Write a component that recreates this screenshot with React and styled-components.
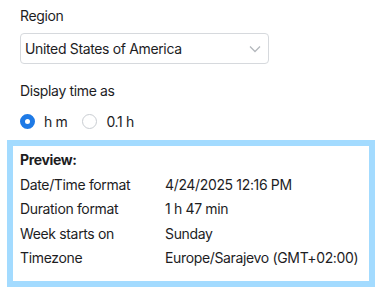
import styled, { createGlobalStyle } from 'styled-components';
import { Fragment } from 'react';

const GlobalStyle = createGlobalStyle`
  body {
    margin: 0;
    background: #fff;
    font-family: Inter, "Noto Sans", sans-serif;
    color: #1d1d1f;
    letter-spacing: -0.35px;
  }
`;

const Page = styled.div`
  width: 388px;
  height: 292px;
  padding-top: 6px;
  box-sizing: border-box;
  white-space: nowrap;
`;

const Section = styled.div`
  padding: 0 20px;
`;

const Label = styled.div`
  font-size: 14px;
  line-height: 20px;
  margin-bottom: ${(props) => props.gap || 7}px;
`;

const Select = styled.div`
  width: 249px;
  height: 31px;
  box-sizing: border-box;
  border: 1px solid #d6d9dd;
  border-radius: 4px;
  display: flex;
  align-items: center;
  justify-content: space-between;
  padding: 0 7px 0 4px;
  font-size: 14px;
  margin-bottom: 17px;
`;

const RadioRow = styled.div`
  display: flex;
  align-items: center;
  gap: 15px;
  height: 24px;
  margin-bottom: 7px;
`;

const RadioOption = styled.label`
  display: flex;
  align-items: center;
  gap: 9px;
  font-size: 14px;
`;

const RadioDot = styled.span`
  width: 15px;
  height: 15px;
  box-sizing: border-box;
  border-radius: 50%;
  border: ${(props) => (props.checked ? '5px solid #1e7ae6' : '1px solid #c9cdd2')};
  background: #fff;
`;

const Preview = styled.div`
  margin: 0 13px 0 7px;
  border: 6px solid #a3dbff;
  padding: 2px 7px 10px;
`;

const PreviewTitle = styled.div`
  font-size: 14px;
  font-weight: 700;
  line-height: 24.5px;
`;

const Grid = styled.div`
  display: grid;
  grid-template-columns: 145px 1fr;
  font-size: 14px;
  line-height: 24.5px;
`;

function Chevron() {
  return (
    <svg width="12" height="8" viewBox="0 0 12 8" fill="none">
      <path d="M1 1.5l5 5 5-5" stroke="#b4b8bd" strokeWidth="1.3" />
    </svg>
  );
}

const rows = [
  ['Date/Time format', '4/24/2025 12:16 PM'],
  ['Duration format', '1 h 47 min'],
  ['Week starts on', 'Sunday'],
  ['Timezone', 'Europe/Sarajevo (GMT+02:00)'],
];

export default function App() {
  return (
    <Page>
      <GlobalStyle />
      <Section>
        <Label>Region</Label>
        <Select>
          <span>United States of America</span>
          <Chevron />
        </Select>
        <Label gap={8}>Display time as</Label>
        <RadioRow>
          <RadioOption>
            <RadioDot checked />
            h m
          </RadioOption>
          <RadioOption>
            <RadioDot />
            0.1 h
          </RadioOption>
        </RadioRow>
      </Section>
      <Preview>
        <PreviewTitle>Preview:</PreviewTitle>
        <Grid>
          {rows.map(([k, v]) => (
            <Fragment key={k}>
              <span>{k}</span>
              <span>{v}</span>
            </Fragment>
          ))}
        </Grid>
      </Preview>
    </Page>
  );
}
